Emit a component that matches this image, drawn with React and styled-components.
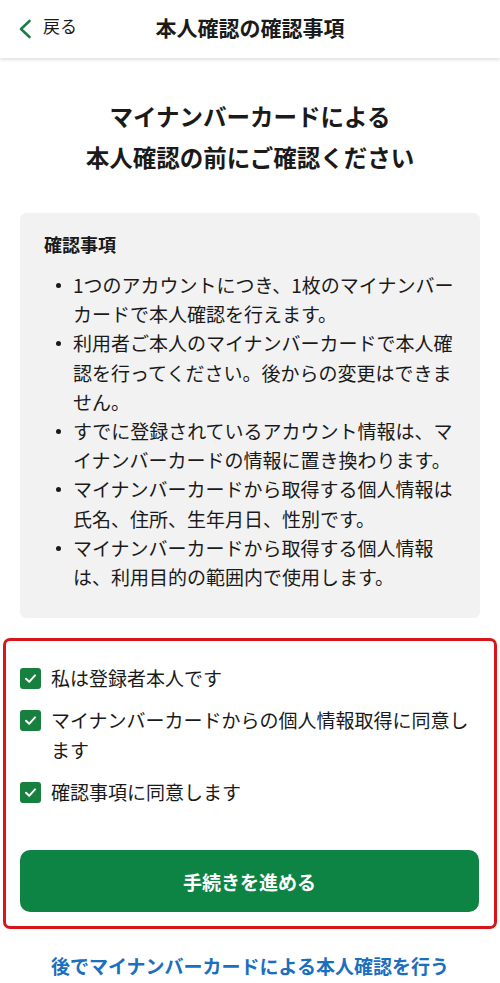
import React from 'react';
import styled, { createGlobalStyle } from 'styled-components';

const GlobalStyle = createGlobalStyle`
  * {
    box-sizing: border-box;
  }
  body {
    margin: 0;
    background: #fff;
    color: #1a1a1a;
    font-family: "Noto Sans CJK JP", "Noto Sans", sans-serif;
  }
`;

const Page = styled.div`
  width: 500px;
  min-height: 983px;
  background: #fff;
`;

const Header = styled.header`
  height: 58px;
  padding-bottom: 5px;
  display: grid;
  grid-template-columns: 1fr auto 1fr;
  align-items: center;
  box-shadow: 0 2px 3px rgba(0, 0, 0, 0.12);
`;

const Back = styled.a`
  display: flex;
  align-items: center;
  gap: 11px;
  padding-left: 18px;
  margin-top: 5px;
  color: #1a1a1a;
  font-size: 17px;
  text-decoration: none;

  span {
    margin-top: -7px;
  }
`;

const Title = styled.h1`
  margin: 0;
  font-size: 21px;
  font-weight: 700;
  line-height: 30px;
`;

const Main = styled.main`
  display: flex;
  flex-direction: column;
`;

const Headline = styled.h2`
  margin: 38px 0 35px;
  text-align: center;
  font-size: 23.5px;
  font-weight: 700;
  line-height: 41px;
`;

const NoticeBox = styled.section`
  margin: 0 20px;
  padding: 18px 22px 27px 24px;
  background: #f2f2f2;
  border-radius: 6px;
`;

const NoticeTitle = styled.h3`
  margin: 0 0 13px;
  font-size: 18px;
  font-weight: 700;
  line-height: 26px;
`;

const List = styled.ul`
  margin: 0;
  padding: 0;
  list-style: none;
`;

const ListItem = styled.li`
  position: relative;
  padding-left: 29px;
  font-size: 19px;
  line-height: 29.2px;

  &::before {
    content: '';
    position: absolute;
    left: 12px;
    top: 13px;
    width: 5px;
    height: 5px;
    border-radius: 50%;
    background: #1a1a1a;
  }
`;

const ConsentBox = styled.section`
  margin: 20px 3px 0;
  padding: 22px 15px 14px 14px;
  border: 3px solid #d8141c;
  border-radius: 7px;
  display: flex;
  flex-direction: column;
`;

const CheckList = styled.div`
  display: flex;
  flex-direction: column;
  gap: 12px;
`;

const CheckRow = styled.label`
  display: flex;
  align-items: flex-start;
  gap: 10px;
  font-size: 19px;
  line-height: 30px;
`;

const Box = styled.span`
  flex: none;
  width: 21px;
  height: 21px;
  margin-top: 5px;
  border-radius: 3px;
  background: #18803f;
  display: flex;
  align-items: center;
  justify-content: center;
`;

const Button = styled.button`
  margin-top: 43px;
  height: 62px;
  border: none;
  border-radius: 10px;
  background: #0d8444;
  color: #fff;
  font-family: inherit;
  font-size: 19px;
  font-weight: 700;
`;

const LaterLink = styled.a`
  display: block;
  margin-top: 22px;
  text-align: center;
  color: #1b6fbf;
  font-size: 19px;
  font-weight: 700;
  line-height: 30px;
  text-decoration: none;
`;

const Check = () => (
  <Box>
    <svg width="13" height="13" viewBox="0 0 13 13" fill="none">
      <path d="M2 6.8 L5.2 9.8 L11 3.4" stroke="#fff" strokeWidth="2" strokeLinecap="round" strokeLinejoin="round" />
    </svg>
  </Box>
);

const notes = [
  '1つのアカウントにつき、1枚のマイナンバーカードで本人確認を行えます。',
  '利用者ご本人のマイナンバーカードで本人確認を行ってください。後からの変更はできません。',
  'すでに登録されているアカウント情報は、マイナンバーカードの情報に置き換わります。',
  'マイナンバーカードから取得する個人情報は氏名、住所、生年月日、性別です。',
  'マイナンバーカードから取得する個人情報は、利用目的の範囲内で使用します。',
];

const agreements = [
  '私は登録者本人です',
  'マイナンバーカードからの個人情報取得に同意します',
  '確認事項に同意します',
];

export default () => (
  <Page>
    <GlobalStyle />
    <Header>
      <Back href="#">
        <svg width="14" height="20" viewBox="0 0 14 20" fill="none">
          <path d="M11.5 2 L3 10 L11.5 18" stroke="#1d7d4a" strokeWidth="2.6" strokeLinecap="round" strokeLinejoin="round" />
        </svg>
        <span>戻る</span>
      </Back>
      <Title>本人確認の確認事項</Title>
      <div />
    </Header>
    <Main>
      <Headline>
        マイナンバーカードによる
        <br />
        本人確認の前にご確認ください
      </Headline>
      <NoticeBox>
        <NoticeTitle>確認事項</NoticeTitle>
        <List>
          {notes.map(n => (
            <ListItem key={n}>{n}</ListItem>
          ))}
        </List>
      </NoticeBox>
      <ConsentBox>
        <CheckList>
          {agreements.map(a => (
            <CheckRow key={a}>
              <Check />
              <span>{a}</span>
            </CheckRow>
          ))}
        </CheckList>
        <Button>手続きを進める</Button>
      </ConsentBox>
      <LaterLink href="#">後でマイナンバーカードによる本人確認を行う</LaterLink>
    </Main>
  </Page>
);
